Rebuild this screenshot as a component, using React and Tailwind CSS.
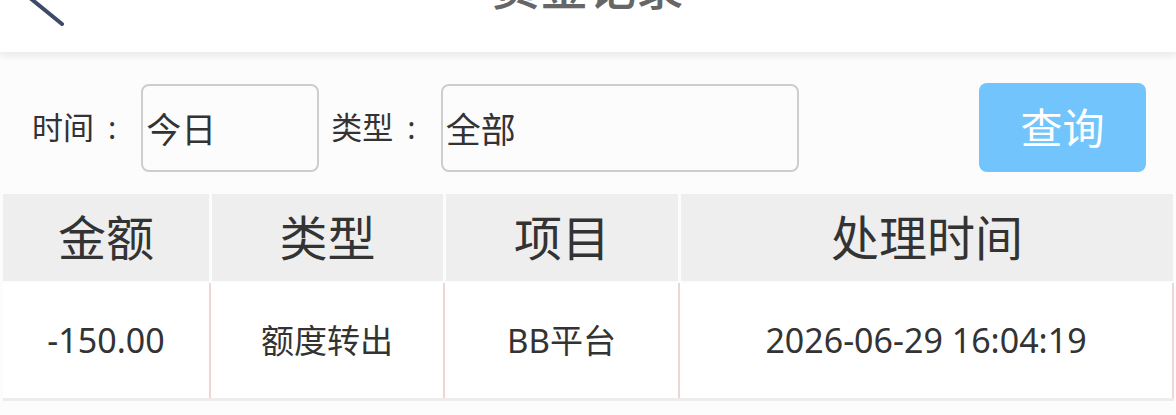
import React, { useState } from "react";

const font = { fontFamily: '"Noto Sans", "Noto Sans CJK SC", sans-serif' };

const records = [
    { amount: "-150.00", type: "额度转出", item: "BB平台", time: "2026-06-29 16:04:19" },
];

const App = () => {
    const [range, setRange] = useState("今日");
    const [kind, setKind] = useState("全部");

    return (
        <div className="w-[1176px] h-[415px] overflow-hidden bg-[#fcfcfc] text-[#333]" style={font}>
            {/* header, scrolled partly out of view */}
            <div className="relative h-[124px] -mt-[72px] bg-white shadow-[0_4px_8px_rgba(0,0,0,0.08)] flex items-center justify-center">
                <svg className="absolute left-[14px] top-[30px]" width="60" height="90" viewBox="0 0 60 90">
                    <polyline points="48,10 16,40 48,66" fill="none" stroke="#3d4a6a" strokeWidth="4" strokeLinecap="round" strokeLinejoin="round" />
                </svg>
                <span className="text-[48px] font-medium text-[#666] -mt-[6px]">资金记录</span>
            </div>

            {/* filters */}
            <div className="flex items-center mt-[31px] h-[89px] pl-[32px] pr-[30px]">
                <span className="text-[31px] leading-none whitespace-nowrap">时间<span className="ml-[14px]">:</span></span>
                <input
                    className="ml-[25px] w-[178px] h-[88px] border-2 border-[#cdcdcd] rounded-[8px] px-[3px] text-[35px] text-[#333] outline-none bg-transparent"
                    style={font}
                    value={range}
                    onChange={(e) => setRange(e.target.value)}
                />
                <span className="ml-[12px] text-[31px] leading-none whitespace-nowrap">类型<span className="ml-[14px]">:</span></span>
                <input
                    className="ml-[25px] w-[358px] h-[88px] border-2 border-[#cdcdcd] rounded-[8px] px-[3px] text-[35px] text-[#333] outline-none bg-transparent"
                    style={font}
                    value={kind}
                    onChange={(e) => setKind(e.target.value)}
                />
                <button
                    type="button"
                    className="ml-auto w-[167px] h-[89px] rounded-[8px] bg-[#72c5fc] text-white text-[42px]"
                    style={font}
                >
                    查询
                </button>
            </div>

            {/* table */}
            <div className="mt-[22px] pl-[3px]">
                <div className="grid grid-cols-[206px_231px_232px_492px] gap-x-[3px] h-[87px]">
                    {["金额", "类型", "项目", "处理时间"].map((h) => (
                        <div key={h} className="bg-[#eeeeee] flex items-center justify-center text-[48px] text-[#333]">
                            {h}
                        </div>
                    ))}
                </div>
                {records.map((r) => (
                    <div key={r.time} className="mt-[2px] grid grid-cols-[208px_234px_235px_494px] h-[118px] border-b-[3px] border-[#ececec] w-[1171px]">
                        <div className="bg-white border-r-2 border-[#efd6d6] flex items-center justify-center text-[34px]">{r.amount}</div>
                        <div className="bg-white border-r-2 border-[#efd6d6] flex items-center justify-center text-[33px]">{r.type}</div>
                        <div className="bg-white border-r-2 border-[#efd6d6] flex items-center justify-center text-[33px]">{r.item}</div>
                        <div className="bg-white border-r-2 border-[#efd6d6] flex items-center justify-center text-[34px]">{r.time}</div>
                    </div>
                ))}
            </div>
        </div>
    );
};

export default App;
